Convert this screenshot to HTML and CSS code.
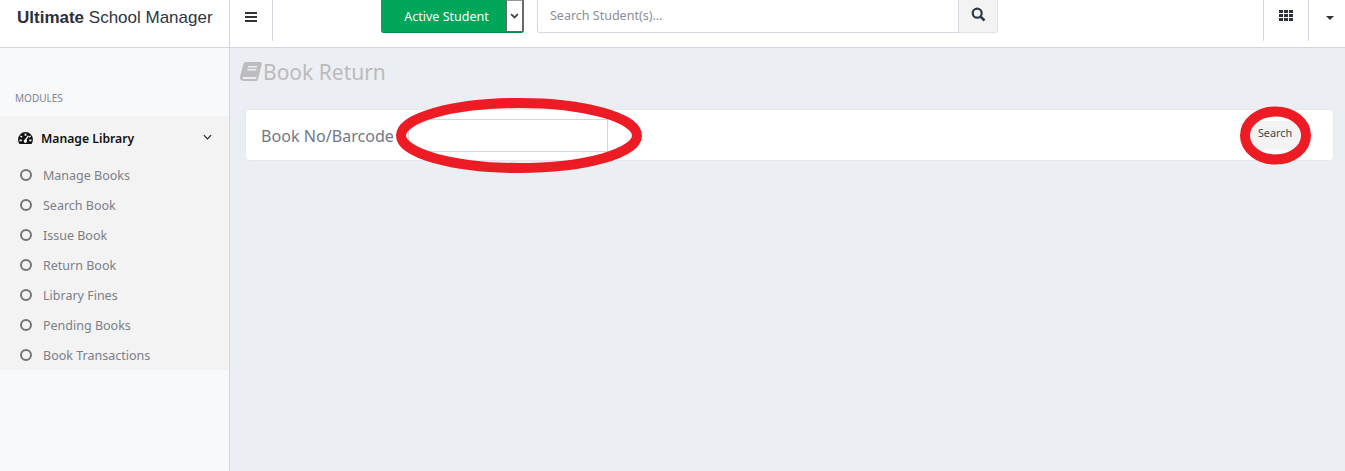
FILE: index.html
```html
<!DOCTYPE html>
<html lang="en">
<head>
<meta charset="utf-8">
<title>Book Return</title>
<link rel="stylesheet" href="styles.css">
</head>
<body>
<header class="topbar">
  <div class="brand"><b>Ultimate</b> School Manager</div>
  <div class="toggle">
    <svg class="ico-bars" viewBox="0 0 12 10"><path d="M0 0h12v2H0zM0 4h12v2H0zM0 8h12v2H0z"/></svg>
  </div>
  <div class="student-split">
    <span class="student-btn">Active Student</span>
    <span class="student-drop"><svg viewBox="0 0 10 7"><path d="M1 1.2l4 4 4-4" fill="none" stroke="#444" stroke-width="2"/></svg></span>
  </div>
  <div class="search-group">
    <span class="search-field">Search Student(s)...</span>
    <span class="search-btn"><svg viewBox="0 0 16 16"><circle cx="6.6" cy="6.6" r="4.8" fill="none" stroke="#2d3a4a" stroke-width="2.4"/><path d="M10.2 10.2l4.2 4.2" stroke="#2d3a4a" stroke-width="2.8"/></svg></span>
  </div>
  <div class="top-right">
    <div class="top-cell grid-cell">
      <svg class="ico-grid" viewBox="0 0 14 11"><path d="M0 0h4v3H0zM5 0h4v3H5zM10 0h4v3h-4zM0 4h4v3H0zM5 4h4v3H5zM10 4h4v3h-4zM0 8h4v3H0zM5 8h4v3H5zM10 8h4v3h-4z"/></svg>
    </div>
    <div class="top-cell caret-cell"><span class="caret"></span></div>
  </div>
</header>
<div class="shell">
  <aside class="sidebar">
    <div class="modules">MODULES</div>
    <nav class="menu">
      <div class="menu-head">
        <svg class="ico-gauge" viewBox="0 0 16 13"><path fill-rule="evenodd" d="M8 0a8 8 0 0 1 8 8c0 1.900-.6 3.500-1.500 5h-13C.6 11.500 0 9.900 0 8a8 8 0 0 1 8-8zM7 1.500v2.500h2V1.500zM2.800 3.700L2 5l2 1.200.8-1.300zM13.200 3.700l-2 1.200.8 1.300 2-1.200zM10.500 3.800L7.200 8.200a1.800 1.800 0 1 0 2 .4l2.300-4.400zM1.500 8v2h2.500V8zM12 8v2h2.500V8z"/></svg>
        <span class="menu-title">Manage Library</span>
        <svg class="ico-chev" viewBox="0 0 10 6"><path d="M1 1l4 4 4-4" fill="none" stroke="#222" stroke-width="1.300"/></svg>
      </div>
      <a class="menu-item"><i class="dot"></i>Manage Books</a>
      <a class="menu-item"><i class="dot"></i>Search Book</a>
      <a class="menu-item"><i class="dot"></i>Issue Book</a>
      <a class="menu-item"><i class="dot"></i>Return Book</a>
      <a class="menu-item"><i class="dot"></i>Library Fines</a>
      <a class="menu-item"><i class="dot"></i>Pending Books</a>
      <a class="menu-item"><i class="dot"></i>Book Transactions</a>
    </nav>
  </aside>
  <main class="content">
    <h1 class="page-title">
      <svg class="ico-book" viewBox="0 0 22 21"><path fill="#bdbdbd" d="M6 0h14.500c1 0 1.500.8 1.300 1.700l-3.600 15c-.4 1.600-1.400 2.300-2.800 2.300H3.500C1.500 19 0 17.600 0 15.700c0-.5.100-1 .2-1.400L3.200 2.300C3.600.9 4.600 0 6 0zM8 4v1.600h9V4zM7.400 7v1.600h9V7zM3.700 15c-.8 0-1.200.4-1.200 1s.5 1 1.300 1h12.100c.2-.6.500-1.300.7-2z"/></svg>Book Return
    </h1>
    <section class="panel">
      <label class="field-label">Book No/Barcode</label>
      <span class="text-input"></span>
      <span class="submit">Search</span>
    </section>
  </main>
</div>
<svg class="marks" viewBox="0 0 1345 471">
  <ellipse cx="519" cy="135.500" rx="118" ry="32.500" fill="none" stroke="#ed1c24" stroke-width="10"/>
  <ellipse cx="1275.500" cy="135.500" rx="30.500" ry="24" fill="none" stroke="#ed1c24" stroke-width="10"/>
</svg>
</body>
</html>
```
FILE: styles.css
```css
* { box-sizing: border-box; }
html, body { margin: 0; height: 471px; overflow: hidden; }
body {
  position: relative;
  display: flex;
  flex-direction: column;
  font-family: "Noto Sans", "Open Sans", sans-serif;
  background: #ebeef3;
}
.topbar {
  display: flex;
  height: 48px;
  flex: none;
  background: #fff;
  border-bottom: 1px solid #d3d6e0;
}
.brand {
  width: 230px;
  flex: none;
  padding: 8px 0 0 17px;
  border-right: 1px solid #d3d6e0;
  font: 17px/20px "Liberation Sans", sans-serif;
  color: #2f3542;
}
.brand b { color: #2b2f38; }
.toggle {
  width: 43px;
  height: 41px;
  flex: none;
  padding: 12px 0 0 15px;
  border-right: 1px solid #d3d6e0;
}
.ico-bars { display: block; width: 12px; height: 10px; fill: #333; }
.student-split {
  display: flex;
  width: 143px;
  height: 33px;
  flex: none;
  margin-left: 108px;
  background: #00a65a;
  border-radius: 0 0 3px 3px;
  border-bottom: 1px solid #008d4c;
}
.student-btn {
  width: 125px;
  padding: 7px 0 0 6px;
  text-align: center;
  font-size: 12.500px;
  line-height: 20px;
  color: #fff;
}
.student-drop {
  display: flex;
  justify-content: center;
  width: 17px;
  height: 32px;
  background: #fff;
  border: 1px solid #666;
  border-top-color: #999;
  padding-top: 12px;
}
.student-drop svg { width: 9px; height: 6px; }
.search-group {
  display: flex;
  width: 461px;
  height: 33px;
  flex: none;
  margin-left: 13px;
}
.search-field {
  flex: 1;
  padding: 6px 0 0 12px;
  font-size: 12.500px;
  line-height: 20px;
  color: #8b8f98;
  border: 1px solid #d5d8e0;
  border-top: 0;
  border-radius: 0 0 0 3px;
}
.search-btn {
  display: flex;
  justify-content: center;
  width: 39px;
  padding-top: 7px;
  background: #f3f3f3;
  border: 1px solid #e0e2e8;
  border-top: 0;
  border-left: 0;
  border-radius: 0 0 3px 0;
}
.search-btn svg { width: 15px; height: 15px; }
.top-right { display: flex; margin-left: auto; height: 41px; }
.top-cell { height: 41px; border-left: 1px solid #d3d6e0; }
.grid-cell { width: 45px; padding: 10px 0 0 15px; }
.caret-cell { width: 37px; padding: 16px 0 0 17px; }
.ico-grid { display: block; width: 14px; height: 11px; fill: #2f3340; }
.caret {
  display: block;
  width: 0;
  height: 0;
  border-left: 4px solid transparent;
  border-right: 4px solid transparent;
  border-top: 4px solid #333;
}
.shell { display: flex; flex: 1; min-height: 0; }
.sidebar {
  width: 230px;
  flex: none;
  background: #f8f9fb;
  border-right: 1px solid #d3d6e0;
  padding-top: 43px;
}
.modules {
  height: 25px;
  padding-left: 15px;
  font-size: 10px;
  line-height: 15px;
  color: #7d8494;
}
.menu { height: 254px; background: #f3f3f3; }
.menu-head {
  display: flex;
  align-items: center;
  height: 44px;
  padding: 0 17px 0 18px;
}
.ico-gauge { width: 15px; height: 12px; flex: none; fill: #111; }
.menu-title {
  margin-left: 8px;
  font-size: 12.200px;
  font-weight: 600;
  color: #111;
}
.ico-chev { width: 9px; height: 6px; margin-left: auto; margin-top: -3px; }
.menu-item {
  display: flex;
  align-items: center;
  height: 30px;
  padding-left: 20px;
  font-size: 12.500px;
  color: #7c7f88;
}
.dot {
  width: 12px;
  height: 12px;
  flex: none;
  margin-right: 11px;
  border: 2.500px solid #757575;
  border-radius: 50%;
}
.content { flex: 1; min-width: 0; padding: 10px 11px 0 15px; }
.page-title {
  display: flex;
  align-items: center;
  height: 28px;
  margin: 0 0 23px -5px;
  font-size: 21px;
  font-weight: 400;
  color: #bbbbbb;
}
.ico-book { width: 22px; height: 21px; margin-right: 1px; }
.panel {
  display: flex;
  align-items: center;
  height: 52px;
  padding-left: 15px;
  background: #fff;
  border: 1px solid #e6e8ee;
  border-radius: 4px;
}
.field-label { width: 133px; flex: none; padding-top: 1px; font-size: 16.100px; color: #727786; white-space: nowrap; }
.text-input {
  width: 200px;
  height: 33px;
  margin-left: 14px;
  background: #fff;
  border: 1px solid #d3d6e0;
}
.submit {
  width: 50px;
  height: 29px;
  margin-left: auto;
  margin-right: 33px;
  background: #f3f3f3;
  border-radius: 3px;
  font-size: 10.800px;
  line-height: 24px;
  text-align: center;
  color: #444;
}
.marks { position: absolute; left: 0; top: 0; width: 1345px; height: 471px; pointer-events: none; }
```
